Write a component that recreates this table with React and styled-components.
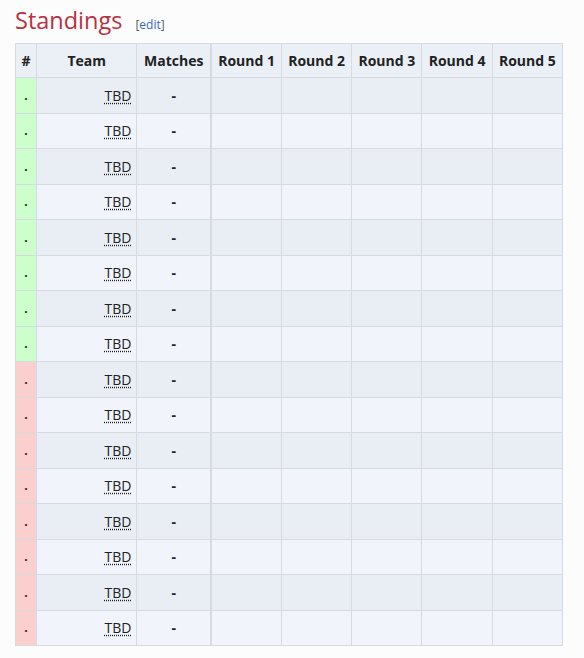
import React from "react";
import styled, { createGlobalStyle } from "styled-components";

const Global = createGlobalStyle`
  html, body { margin: 0; padding: 0; background: #fcfcfd; }
  body { font-family: "Open Sans", "Noto Sans", sans-serif; color: #202122; }
`;

const Page = styled.div`
  padding: 4px 16px 0 15px;
`;

const Heading = styled.div`
  display: flex;
  align-items: baseline;
  gap: 13px;
  height: 39px;
`;

const Title = styled.h2`
  margin: 0;
  font-weight: 400;
  font-size: 23.5px;
  line-height: 32px;
  color: #b8313f;
`;

const Edit = styled.span`
  font-size: 12px;
  color: #54595d;
  a { color: #3366cc; text-decoration: none; }
`;

const Table = styled.table`
  border-collapse: collapse;
  table-layout: fixed;
  width: 548px;
  font-size: 14px;
  border: 1px solid #d6dbe2;
`;

const Th = styled.th`
  background: #eaf0f6;
  border: 1px solid #d6dbe2;
  height: 33px;
  padding: 0;
  font-weight: 700;
  font-size: 14px;
  text-align: center;
  white-space: nowrap;
  color: #222;
  ${(p) => p.$thick && `border-right: 2px solid #d6dbe2;`}
`;

const Row = styled.tr`
  background: ${(p) => (p.$odd ? "#e9eef5" : "#f1f4fa")};
`;

const Td = styled.td`
  border: 1px solid #d6dbe2;
  height: 34.5px;
  padding: 0;
  font-size: 14px;
  text-align: ${(p) => p.$align || "center"};
  ${(p) => p.$thick && `border-right: 2px solid #d6dbe2;`}
`;

const Rank = styled(Td)`
  background: ${(p) => (p.$up ? "#ccffcc" : "#fccfcf")};
  font-weight: 700;
  font-size: 12px;
`;

const TeamCell = styled(Td)`
  padding-right: 5px;
`;

const Abbr = styled.abbr`
  text-decoration: underline dotted;
  text-underline-offset: 2px;
  cursor: help;
  font-size: 14px;
`;

const Dash = styled.span`
  font-weight: 700;
`;

const cols = [21, 100, 74, 70, 70, 70, 70, 70];

export default function App() {
  const rows = Array.from({ length: 16 }, (_, i) => i);
  return (
    <>
      <Global />
      <Page>
        <Heading>
          <Title>Standings</Title>
          <Edit>
            [<a href="#">edit</a>]
          </Edit>
        </Heading>
        <Table>
          <colgroup>
            {cols.map((w, i) => (
              <col key={i} style={{ width: w }} />
            ))}
          </colgroup>
          <thead>
            <tr>
              <Th>#</Th>
              <Th>Team</Th>
              <Th $thick>Matches</Th>
              <Th>Round 1</Th>
              <Th>Round 2</Th>
              <Th>Round 3</Th>
              <Th>Round 4</Th>
              <Th>Round 5</Th>
            </tr>
          </thead>
          <tbody>
            {rows.map((i) => (
              <Row key={i} $odd={i % 2 === 0}>
                <Rank $up={i < 8}>.</Rank>
                <TeamCell $align="right">
                  <Abbr title="To be determined">TBD</Abbr>
                </TeamCell>
                <Td $thick>
                  <Dash>-</Dash>
                </Td>
                <Td />
                <Td />
                <Td />
                <Td />
                <Td />
              </Row>
            ))}
          </tbody>
        </Table>
      </Page>
    </>
  );
}
